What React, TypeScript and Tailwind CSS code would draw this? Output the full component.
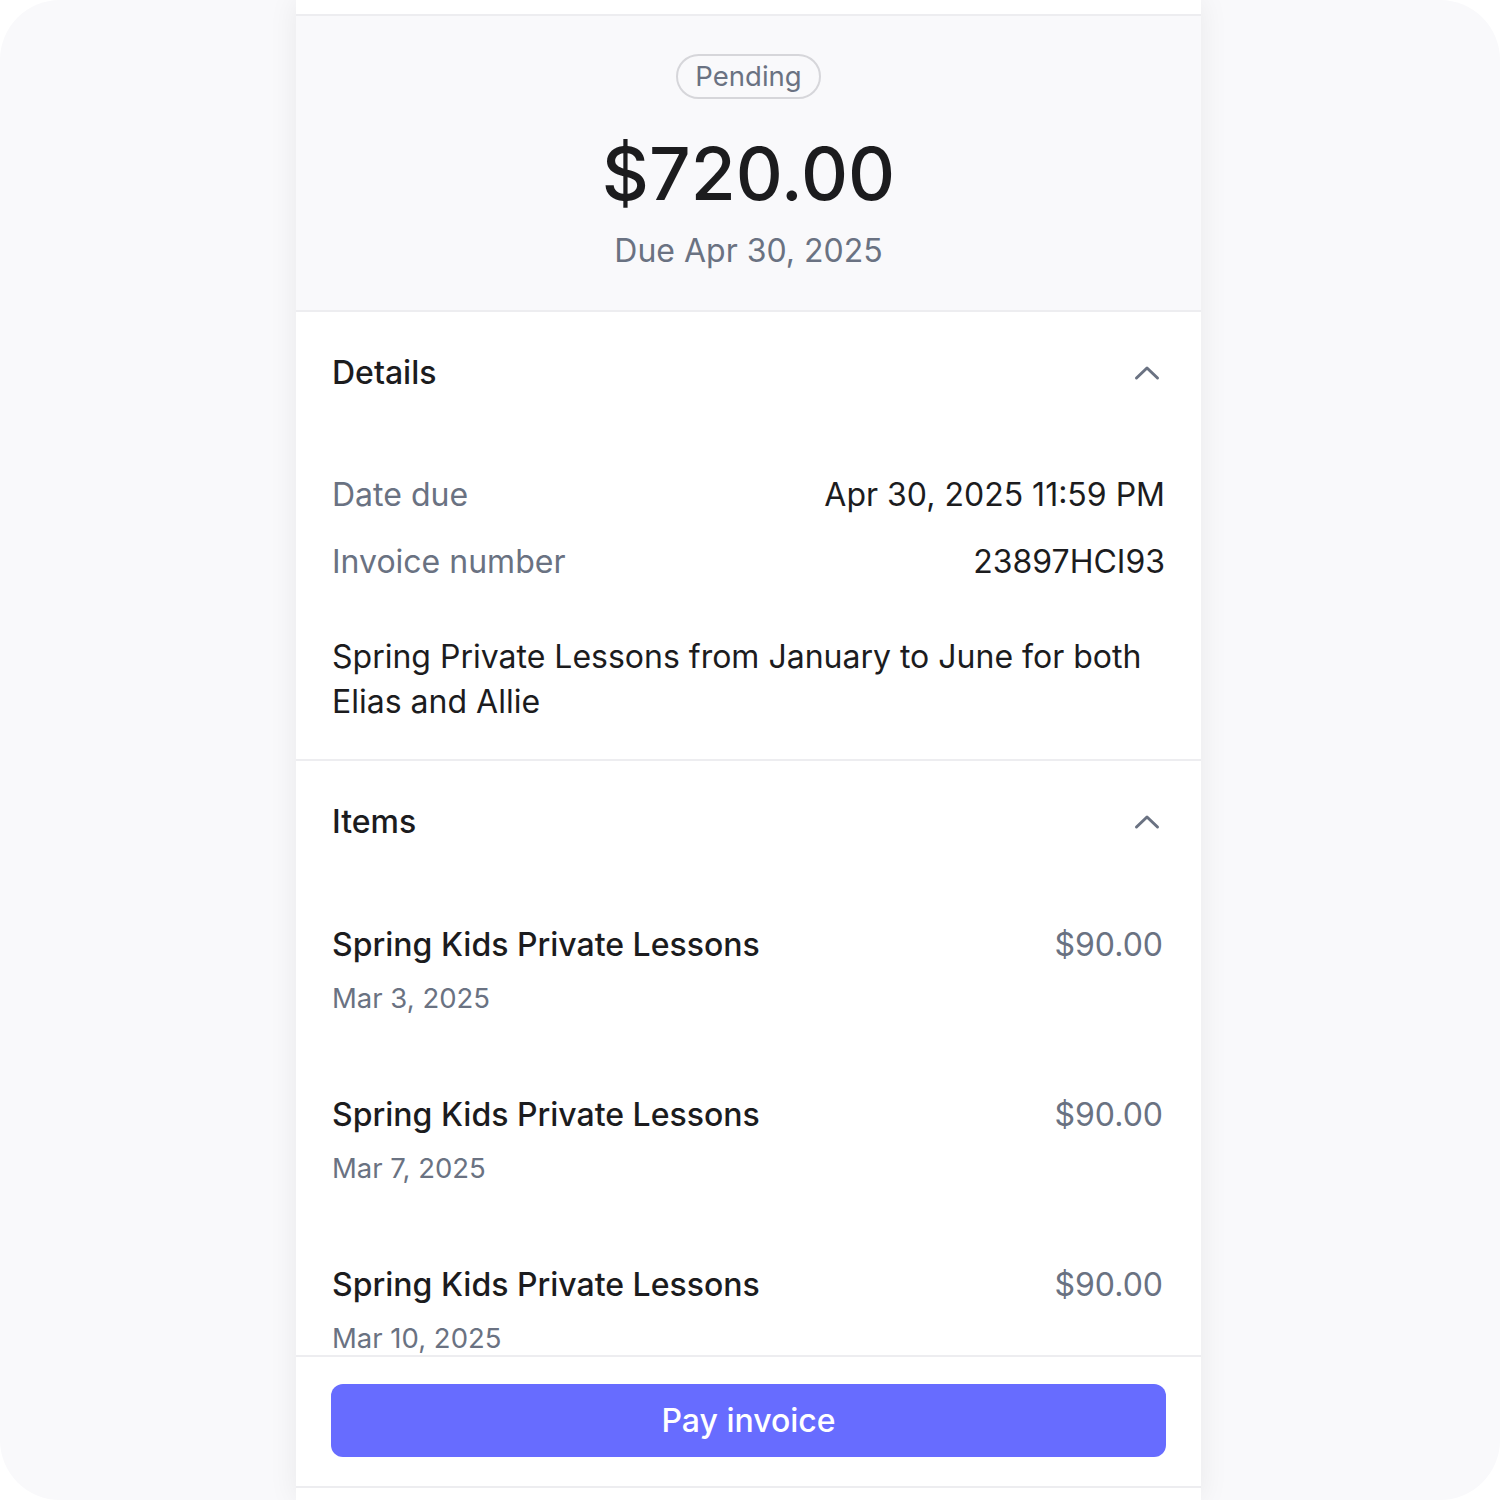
import React from 'react';

function Chevron() {
  return (
    <svg width="26" height="16" viewBox="0 0 26 16" fill="none" className="text-gray-500">
      <path d="M2.5 13 L13 3 L23.5 13" stroke="currentColor" strokeWidth="3" strokeLinecap="round" strokeLinejoin="round" />
    </svg>
  );
}

export default function App() {
  const items = [
    { name: 'Spring Kids Private Lessons', date: 'Mar 3, 2025', price: '$90.00' },
    { name: 'Spring Kids Private Lessons', date: 'Mar 7, 2025', price: '$90.00' },
    { name: 'Spring Kids Private Lessons', date: 'Mar 10, 2025', price: '$90.00' }
  ];

  return (
    <div className="w-[1500px] h-[1500px] bg-white" style={{ fontFamily: 'Inter, "Noto Sans", sans-serif' }}>
      <div className="w-full h-full rounded-[60px] bg-[#f9f9fb] overflow-hidden flex pl-[296px]">
        <div className="w-[905px] h-full bg-white flex flex-col shadow-[0_0_28px_rgba(0,0,0,0.07)] text-[#1c1c1e]">
          <div className="h-[16px] shrink-0 bg-white border-b-2 border-[#ededf0]" />

          <div className="shrink-0 bg-[#f9f9fb] border-b-2 border-[#ededf0] pt-[38px] pb-[37px] flex flex-col items-center">
            <div className="h-[45px] px-[17px] rounded-full border-2 border-[#d6d6da] text-gray-500 text-[27.5px] leading-[41px]">
              Pending
            </div>
            <div className="mt-[35px] h-[80px] leading-[80px] text-[73px] font-medium">$720.00</div>
            <div className="mt-[15px] h-[44px] leading-[44px] text-[32px] text-gray-500">Due Apr 30, 2025</div>
          </div>

          <div className="shrink-0 border-b-2 border-[#ededf0] px-9 pt-[39px] pb-[35px]">
            <div className="h-[44px] flex items-center justify-between">
              <span className="text-[32px] font-medium">Details</span>
              <span className="mr-[5px]"><Chevron /></span>
            </div>
            <div className="mt-[78px] h-[44px] flex items-center justify-between text-[32px]">
              <span className="text-gray-500">Date due</span>
              <span>Apr 30, 2025 11:59 PM</span>
            </div>
            <div className="mt-[23px] h-[44px] flex items-center justify-between text-[32px]">
              <span className="text-gray-500">Invoice number</span>
              <span>23897HCI93</span>
            </div>
            <p className="mt-[50px] text-[32px] leading-[45px]">
              Spring Private Lessons from January to June for both Elias and Allie
            </p>
          </div>

          <div className="flex-1 min-h-0 overflow-hidden border-b-2 border-[#ededf0] px-9 pt-[39px]">
            <div className="h-[44px] flex items-center justify-between">
              <span className="text-[32px] font-medium">Items</span>
              <span className="mr-[5px]"><Chevron /></span>
            </div>
            <div className="mt-[79px] flex flex-col gap-[75px]">
              {items.map((item, i) => (
                <div key={i} className="flex flex-col">
                  <div className="h-[44px] flex items-center justify-between text-[32px]">
                    <span className="font-medium">{item.name}</span>
                    <span className="text-gray-500 mr-[2px]">{item.price}</span>
                  </div>
                  <div className="mt-[11px] h-[40px] leading-[40px] text-[27.5px] text-gray-500">{item.date}</div>
                </div>
              ))}
            </div>
          </div>

          <div className="shrink-0 h-[131px] border-b-2 border-[#ededf0] px-[35px] pt-[27px]">
            <button className="w-full h-[73px] rounded-[12px] bg-[#676cff] text-white text-[32px] font-medium">
              Pay invoice
            </button>
          </div>
          <div className="h-[12px] shrink-0 bg-white" />
        </div>
      </div>
    </div>
  );
}
